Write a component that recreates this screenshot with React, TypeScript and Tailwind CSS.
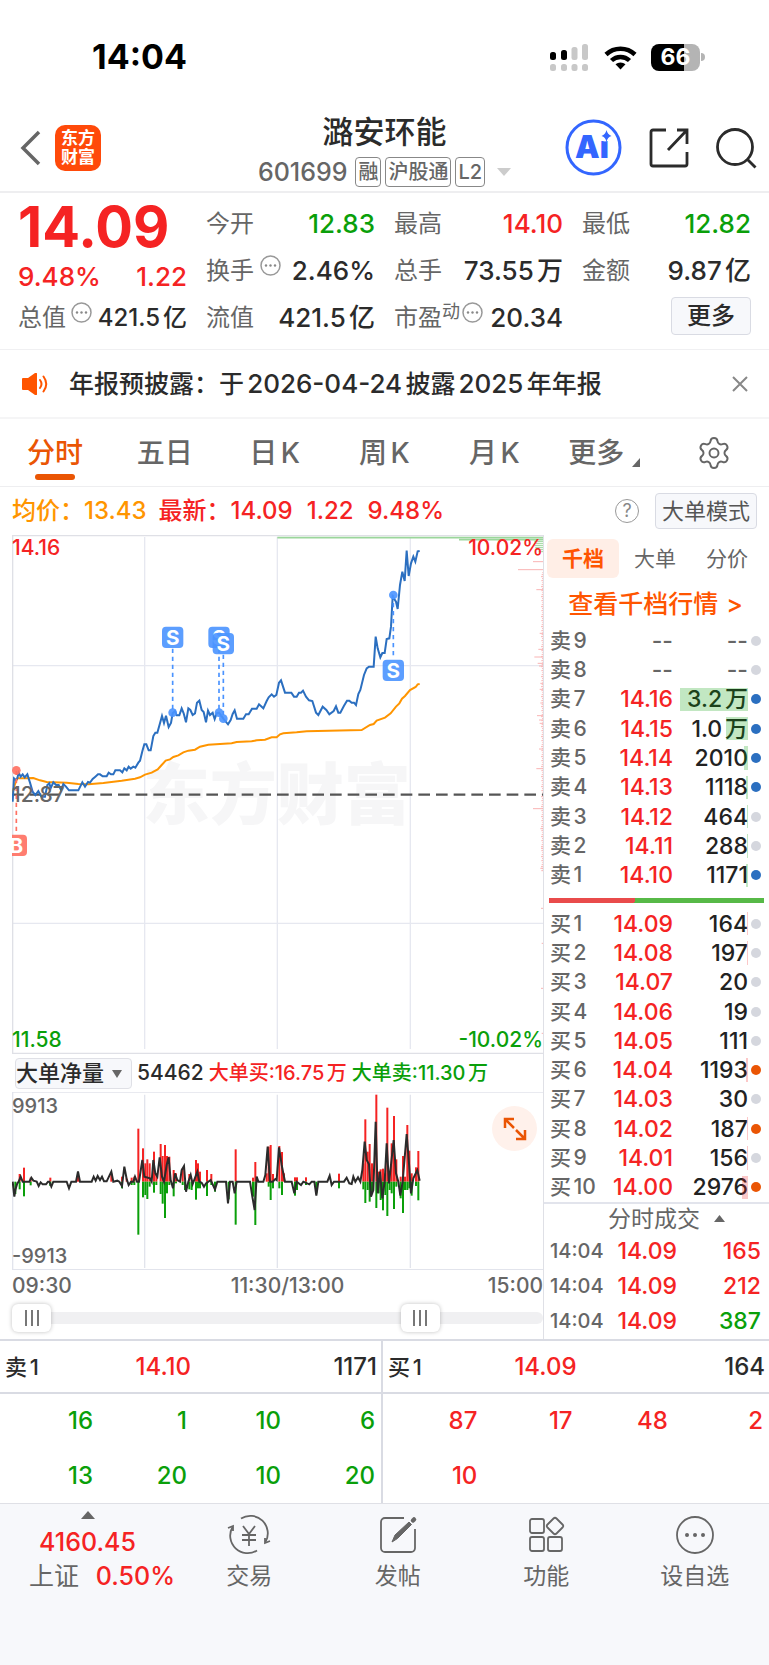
import React, { useState } from "react";
import { Settings } from "lucide-react";
import { clsx } from "clsx";

interface Level {
  name: string;
  price: string;
  qty: string;
  dot: "none" | "blue" | "orange";
  bar: number;
}

const sells: Level[] = [
  { name: "卖9", price: "--", qty: "--", dot: "none", bar: 0 },
  { name: "卖8", price: "--", qty: "--", dot: "none", bar: 0 },
  { name: "卖7", price: "14.16", qty: "3.2万", dot: "blue", bar: 68 },
  { name: "卖6", price: "14.15", qty: "1.0万", dot: "blue", bar: 22 },
  { name: "卖5", price: "14.14", qty: "2010", dot: "blue", bar: 4 },
  { name: "卖4", price: "14.13", qty: "1118", dot: "blue", bar: 2 },
  { name: "卖3", price: "14.12", qty: "464", dot: "none", bar: 1 },
  { name: "卖2", price: "14.11", qty: "288", dot: "none", bar: 1 },
  { name: "卖1", price: "14.10", qty: "1171", dot: "blue", bar: 2 },
];

const buys: Level[] = [
  { name: "买1", price: "14.09", qty: "164", dot: "none", bar: 1 },
  { name: "买2", price: "14.08", qty: "197", dot: "none", bar: 1 },
  { name: "买3", price: "14.07", qty: "20", dot: "none", bar: 0 },
  { name: "买4", price: "14.06", qty: "19", dot: "none", bar: 0 },
  { name: "买5", price: "14.05", qty: "111", dot: "none", bar: 0 },
  { name: "买6", price: "14.04", qty: "1193", dot: "orange", bar: 2 },
  { name: "买7", price: "14.03", qty: "30", dot: "none", bar: 0 },
  { name: "买8", price: "14.02", qty: "187", dot: "orange", bar: 1 },
  { name: "买9", price: "14.01", qty: "156", dot: "none", bar: 1 },
  { name: "买10", price: "14.00", qty: "2976", dot: "orange", bar: 6 },
];

const trades = [
  { time: "14:04", price: "14.09", qty: "165", up: true },
  { time: "14:04", price: "14.09", qty: "212", up: true },
  { time: "14:04", price: "14.09", qty: "387", up: false },
];

const pricePoints =
  "38,815 40,780 42,745 48,750 52,745 56,728 62,740 68,733 74,742 82,733 90,758 98,785 106,795 115,783 124,800 135,800 142,765 148,760 152,775 160,757 168,765 176,765 183,780 190,762 198,770 207,781 235,781 247,757 255,770 264,756 270,758 278,747 286,740 294,733 300,733 308,739 320,739 326,728 333,733 340,733 346,721 360,721 367,727 373,715 380,721 386,710 392,716 400,710 406,713 415,698 420,692 427,664 433,643 439,643 446,661 452,661 460,618 466,608 472,608 480,580 486,558 492,579 498,557 506,591 513,579 518,550 525,543 530,556 538,556 545,535 551,550 558,577 565,535 571,540 578,555 585,550 591,518 598,512 605,540 611,546 618,577 624,542 630,555 638,548 644,567 650,550 657,548 670,566 684,583 692,570 698,552 704,541 711,566 730,566 738,553 746,553 756,536 770,536 777,523 790,535 800,513 806,502 815,493 822,500 829,495 837,458 843,451 855,488 874,488 882,500 890,500 897,488 903,488 909,482 918,500 927,511 937,513 948,548 955,555 968,530 979,540 988,553 1001,543 1008,529 1015,548 1021,548 1032,527 1041,512 1048,512 1055,518 1062,518 1068,525 1075,492 1081,480 1092,435 1100,415 1107,410 1121,410 1127,320 1133,355 1141,382 1147,369 1154,369 1160,327 1168,325 1173,290 1178,200 1188,215 1193,237 1200,165 1207,125 1214,153 1220,62 1226,138 1233,100 1240,80 1246,95 1253,64 1259,63";

const avgPoints =
  "38,790 44,765 52,745 70,745 100,744 120,751 140,756 200,758 235,762 265,763 310,759 365,752 405,746 420,742 435,734 455,728 473,718 485,705 497,692 510,688 520,681 535,676 550,667 565,662 585,659 600,650 625,644 695,640 710,636 755,634 770,631 795,629 815,622 830,622 840,613 850,610 890,607 920,604 1085,600 1110,585 1121,582 1130,572 1155,563 1172,550 1188,530 1198,520 1206,506 1215,498 1230,480 1247,471 1253,463 1259,462";

const netPoints =
  "38,455 43,500 46,480 52,460 56,455 62,440 68,455 88,455 94,443 100,452 110,455 116,468 122,457 128,463 138,463 144,455 148,455 154,470 160,455 200,455 207,475 214,455 228,455 234,424 240,455 275,455 281,440 287,452 293,438 300,450 306,440 312,454 320,454 334,425 340,455 352,452 358,455 366,468 373,410 380,447 386,465 393,455 400,455 405,440 411,455 417,455 427,390 433,440 450,445 455,455 460,390 466,430 472,440 479,382 486,440 492,455 500,405 506,382 512,450 519,475 525,430 532,450 540,455 545,420 552,408 558,485 565,455 572,435 578,462 592,425 598,455 605,458 612,470 618,460 632,450 645,478 652,455 678,455 684,520 690,455 698,455 704,490 710,455 750,455 757,500 764,540 770,440 775,455 790,455 796,435 803,350 810,455 818,455 826,447 830,450 837,352 845,405 855,455 875,455 883,490 890,455 903,465 910,455 928,463 935,455 943,455 949,497 955,455 982,455 989,437 995,465 1002,455 1032,455 1040,443 1048,460 1055,462 1060,440 1066,455 1074,442 1081,455 1087,420 1094,335 1100,390 1107,403 1113,500 1120,480 1127,275 1133,490 1140,425 1147,505 1154,455 1160,340 1167,460 1181,330 1188,430 1195,455 1201,497 1208,455 1220,312 1227,400 1233,490 1240,445 1252,420 1259,452";

// [x, top, bottom] around the zero line at 455
const netBars = [
  [46, 455, 492], [59, 432, 478], [72, 413, 499], [92, 443, 466], [151, 443, 468],
  [234, 430, 455], [334, 430, 455], [366, 440, 475], [380, 445, 455], [395, 443, 465],
  [403, 440, 465], [415, 296, 614], [429, 355, 502], [436, 400, 495], [442, 388, 507],
  [449, 400, 470], [462, 365, 488], [469, 430, 465], [482, 342, 492], [488, 378, 521],
  [495, 345, 564], [501, 378, 490], [508, 380, 465], [521, 420, 499], [528, 430, 460],
  [548, 415, 465], [555, 455, 480], [568, 432, 478], [575, 455, 480], [588, 390, 509],
  [594, 400, 475], [600, 425, 475], [621, 420, 498], [634, 432, 465], [645, 455, 485],
  [686, 455, 508], [707, 358, 584], [759, 443, 500], [766, 396, 585], [800, 430, 455],
  [806, 350, 470], [812, 345, 510], [819, 432, 475], [838, 348, 475], [846, 366, 495],
  [852, 430, 455], [885, 442, 497], [891, 442, 480], [918, 442, 465], [949, 455, 490],
  [1017, 431, 475], [1090, 400, 478], [1096, 268, 519], [1103, 365, 480], [1109, 342, 515],
  [1116, 400, 490], [1129, 194, 534], [1136, 425, 490], [1142, 418, 510], [1149, 416, 541],
  [1156, 430, 495], [1162, 233, 558], [1169, 430, 480], [1175, 340, 490], [1182, 258, 537],
  [1189, 388, 470], [1202, 440, 505], [1209, 378, 549], [1215, 440, 480], [1222, 285, 480],
  [1228, 362, 475], [1235, 430, 497], [1248, 412, 468], [1255, 363, 511],
];

// pending orders along the right axis, [y, length]
const bigTicks = [
  [95, 30], [119, 75], [179, 20], [310, 10], [358, 14], [381, 26], [400, 16], [408, 12],
  [460, 8], [478, 10], [519, 8], [557, 18], [570, 12], [580, 10], [657, 12], [716, 20],
  [836, 30], [896, 8], [955, 6], [1015, 8], [1135, 6], [1240, 4], [1375, 6], [1510, 4],
];
const smallTicks = Array.from({ length: 150 }, (_, i) => [128 + i * 6, 2 + ((i * 7) % 5)]);

function StatusBar() {
  return (
    <div className="flex h-[104px] items-center justify-between pt-2.5 pr-[64px] pl-[92px]">
      <div className="text-[34px] leading-8 font-bold text-black">14:04</div>
      <div className="flex items-center gap-3.5">
        <svg width="40" height="27" viewBox="0 0 40 27" aria-hidden="true">
          <g fill="#000">
            <rect x="0" y="8" width="6" height="8" rx="2.500" />
            <rect x="11" y="6" width="6" height="10" rx="2.500" />
          </g>
          <g fill="#c8c8c8">
            <rect x="21.500" y="3" width="6" height="13" rx="2.500" />
            <rect x="32" y="0" width="6" height="16" rx="2.500" />
            <rect x="0" y="20" width="6" height="7" rx="2.500" />
            <rect x="11" y="20" width="6" height="7" rx="2.500" />
            <rect x="21.500" y="20" width="6" height="7" rx="2.500" />
            <rect x="32" y="20" width="6" height="7" rx="2.500" />
          </g>
        </svg>
        <svg width="33" height="25" viewBox="0 0 33 25" fill="none" stroke="#000" strokeWidth="4.500" aria-hidden="true">
          <path d="M2 9.500a21 21 0 0 1 29 0" />
          <path d="M7.500 15.500a13 13 0 0 1 18 0" />
          <path d="M16.500 24.500l-5-5.200a7.500 7.500 0 0 1 10 0z" fill="#000" stroke="none" />
        </svg>
        <div className="flex items-center gap-px">
          <div className="flex h-[27px] w-[49px] items-center justify-center rounded-lg bg-linear-to-r from-black from-67% to-[#b4b4b4] to-67% text-[23px] font-bold text-white">
            66
          </div>
          <div className="h-2 w-1 rounded-r-full bg-[#b4b4b4]" />
        </div>
      </div>
    </div>
  );
}

function Tag({ children }: { children: React.ReactNode }) {
  return (
    <span className="flex h-[30px] items-center rounded-sm border border-[#888] px-0.5 text-[20px] leading-6 text-[#666]">
      {children}
    </span>
  );
}

function Header() {
  return (
    <header className="grid h-[89px] grid-cols-[1fr_auto_1fr] items-center border-b-2 border-[#eeeef0] px-3">
      <div className="flex items-center gap-3.5 pl-2">
        <button aria-label="返回">
          <svg width="21" height="36" viewBox="0 0 21 36" fill="none" stroke="#666" strokeWidth="3.500">
            <path d="M19 2L3 18l16 16" />
          </svg>
        </button>
        <a href="#" className="flex size-[46px] flex-col items-center justify-center rounded-[10px] bg-[#ff4a0a] text-[17px] leading-[19px] font-bold text-white">
          <span>东方</span>
          <span>财富</span>
        </a>
      </div>
      <div className="flex flex-col items-center pt-1.5">
        <h1 className="h-[42px] text-[31px] leading-9 font-medium text-[#2b2b2b]">潞安环能</h1>
        <div className="flex items-center gap-1 text-[25px] leading-8 font-medium text-[#666]">
          <span className="pr-1">601699</span>
          <Tag>融</Tag>
          <Tag>沪股通</Tag>
          <Tag>L2</Tag>
          <svg width="14" height="8" viewBox="0 0 14 8" className="ml-2" fill="#ccc">
            <path d="M0 0h14L7 8z" />
          </svg>
        </div>
      </div>
      <div className="flex items-center justify-end gap-[27px]">
        <button aria-label="AI 助手">
          <svg width="57" height="57" viewBox="0 0 57 57">
            <circle cx="28.500" cy="28.500" r="26.500" fill="none" stroke="#3366ff" strokeWidth="3" />
            <text x="10" y="39" fontSize="31" fontWeight="900" fill="#3366ff">Ai</text>
            <circle cx="40" cy="16" r="6.500" fill="#fff" />
            <path d="M41.500 11q1 4.500 5 6q-4 1-5 6q-1-5-5-6q4-1.500 5-6z" fill="#3366ff" />
          </svg>
        </button>
        <button aria-label="分享">
          <svg width="40" height="40" viewBox="0 0 40 40" fill="none" stroke="#2b2b2b" strokeWidth="2.800">
            <path d="M17 2H4a2 2 0 0 0-2 2v32a2 2 0 0 0 2 2h32a2 2 0 0 0 2-2V24" />
            <path d="M28 2h10v14M37.500 2.500L19 22" />
          </svg>
        </button>
        <button aria-label="搜索">
          <svg width="41" height="42" viewBox="0 0 41 42" fill="none" stroke="#2b2b2b" strokeWidth="2.800">
            <circle cx="19" cy="20" r="17.500" />
            <path d="M31 32l8.500 8.500" />
          </svg>
        </button>
      </div>
    </header>
  );
}

function MoreDots() {
  return (
    <svg width="21" height="21" viewBox="0 0 21 21" className="mb-2.5 shrink-0" aria-hidden="true">
      <circle cx="10.500" cy="10.500" r="9.500" fill="none" stroke="#999" strokeWidth="1.500" />
      <g fill="#888">
        <circle cx="6" cy="10.500" r="1.200" />
        <circle cx="10.500" cy="10.500" r="1.200" />
        <circle cx="15" cy="10.500" r="1.200" />
      </g>
    </svg>
  );
}

interface StatProps {
  label: string;
  value: string;
  tone?: "up" | "down";
  dots?: boolean;
  sup?: string;
}

function Stat({ label, value, tone, dots, sup }: StatProps) {
  return (
    <div className="flex h-[47px] items-center justify-between whitespace-nowrap">
      <dt className="flex items-center text-[#666]">
        {label}
        {sup && <span className="mb-3 text-lg leading-5">{sup}</span>}
        {dots && <span className={clsx(sup ? "pl-0.5" : "pl-1.5")}><MoreDots /></span>}
      </dt>
      <dd
        className={clsx(
          "text-[26px] font-medium",
          tone === "up" ? "text-[#f52323]" : tone === "down" ? "text-[#0a9f0a]" : "text-[#2b2b2b]"
        )}
      >
        {value}
      </dd>
    </div>
  );
}

function Quote() {
  return (
    <section className="grid grid-cols-4 gap-x-[19px] border-b border-[#f0f0f2] px-[18px] pt-[7px] pb-2 text-2xl leading-8">
      <div>
        <div className="h-[60px] text-[56px] leading-[54px] font-bold text-[#f52323]">14.09</div>
        <div className="flex h-[34px] items-center justify-between text-[26px] font-medium text-[#f52323]">
          <span>9.48%</span>
          <span>1.22</span>
        </div>
        <div className="flex h-[47px] items-center justify-between whitespace-nowrap">
          <span className="text-[#666]">总值</span>
          <MoreDots />
          <span className="font-medium text-[#2b2b2b]">421.5亿</span>
        </div>
      </div>
      <dl>
        <Stat label="今开" value="12.83" tone="down" />
        <Stat label="换手" value="2.46%" dots />
        <Stat label="流值" value="421.5亿" />
      </dl>
      <dl>
        <Stat label="最高" value="14.10" tone="up" />
        <Stat label="总手" value="73.55万" />
        <Stat label="市盈" sup="动" value="20.34" dots />
      </dl>
      <div>
        <dl>
          <Stat label="最低" value="12.82" tone="down" />
          <Stat label="金额" value="9.87亿" />
        </dl>
        <button className="mt-[3px] ml-auto block h-[38px] w-20 rounded-sm border border-[#d9dbe3] bg-[#f7f8fb] font-medium text-[#2b2b2b]">
          更多
        </button>
      </div>
    </section>
  );
}

function Notice() {
  return (
    <div className="flex h-[69px] items-center border-b-2 border-[#f5f5f6] pr-[21px] pl-[22px]">
      <svg width="26" height="22" viewBox="0 0 26 22" fill="#ff5500" aria-hidden="true">
        <path d="M1 5h5l7-5q2-1 2 1v20q0 2-2 1l-7-5H1q-1 0-1-1V6q0-1 1-1z" />
        <path d="M18 7q3 4 0 8M21.500 3.500q5.500 7.500 0 15" fill="none" stroke="#ff5500" strokeWidth="2" strokeLinecap="round" />
      </svg>
      <p className="ml-[21px] text-[25px] leading-8 font-medium whitespace-nowrap text-[#2b2b2b]">
        年报预披露：于<span className="text-[26px]">2026-04-24</span>披露<span className="text-[26px]">2025</span>年年报
      </p>
      <button aria-label="关闭" className="ml-auto">
        <svg width="16" height="16" viewBox="0 0 16 16" stroke="#888" strokeWidth="2">
          <path d="M1 1l14 14M15 1L1 15" />
        </svg>
      </button>
    </div>
  );
}

function PeriodTabs() {
  const [active, setActive] = useState("分时");
  const tabs = ["分时", "五日", "日K", "周K", "月K"];

  return (
    <nav className="grid h-[68px] grid-cols-7 items-stretch border-b border-[#eeeef0] text-[28px] leading-8 font-medium text-[#666]">
      {tabs.map((tab) => (
        <button
          key={tab}
          onClick={() => setActive(tab)}
          className={clsx("relative flex items-center justify-center", active === tab && "text-[#ea5504]")}
        >
          {tab}
          {active === tab && (
            <span className="absolute bottom-1.5 left-1/2 h-1.5 w-10 -translate-x-1/2 rounded-full bg-[#ea5504]" />
          )}
        </button>
      ))}
      <button className="flex items-center justify-center gap-2">
        更多
        <svg width="8" height="9" viewBox="0 0 8 9" className="mt-5" fill="#666">
          <path d="M8 0v9H0z" />
        </svg>
      </button>
      <button aria-label="设置" className="flex items-center justify-center">
        <Settings size={36} strokeWidth={1.3} />
      </button>
    </nav>
  );
}

function AverageRow() {
  return (
    <div className="flex h-12 items-center px-3 text-[24px] leading-8 font-medium whitespace-nowrap text-[#f52323]">
      <span className="text-[#ff9500]">均价：13.43</span>
      <span className="ml-3">最新：14.09</span>
      <span className="ml-3.5">1.22</span>
      <span className="ml-3.5">9.48%</span>
      <button aria-label="帮助" className="ml-auto flex size-6 items-center justify-center rounded-full border-[1px] border-[#999] text-lg leading-5 font-normal text-[#888]">
        ?
      </button>
      <button className="ml-4 h-9 rounded-sm border border-[#d9dbe3] bg-[#f7f8fb] px-1.5 text-[22px] leading-8 font-normal text-[#555]">
        大单模式
      </button>
    </div>
  );
}

interface MarkProps {
  x: number;
  y: number;
  from: number;
  to: number;
  dotY: number;
  label: string;
  color: string;
}

function Mark({ x, y, from, to, dotY, label, color }: MarkProps) {
  return (
    <g>
      <path d={`M${x} ${from}V${to}`} stroke={color} strokeWidth="5" strokeDasharray="13 11" />
      <circle cx={x} cy={dotY} r="13" fill={color} fillOpacity="0.9" />
      <rect x={x - 32} y={y} width="64" height="64" rx="12" fill={color} fillOpacity="0.9" />
      <text x={x} y={y + 54} textAnchor="middle" fontSize="62" fontWeight="700" fill="#fff">
        {label}
      </text>
    </g>
  );
}

function PriceChart() {
  return (
    <div className="relative text-[21px] leading-6 font-medium">
      <svg viewBox="36 15 1593 1557" className="block w-full" role="img" aria-label="分时走势">
        <text x="428" y="866" fontSize="201" fontWeight="900" fill="#f6f6f7">东方财富</text>
        <g stroke="#e6e8f0" strokeWidth="4" fill="none">
          <path d="M434 21V1557M832 21V1557M1231 21V1557M36 407H1629M36 1180H1629" />
          <path d="M38 15V1572M36 17H1629M36 1570H1629" stroke="#dfe0e6" />
        </g>
        <g stroke="#9bd69b">
          <path d="M832 23H1629" strokeWidth="5" />
          <path d="M1377 29H1629" strokeWidth="5" />
          <path d="M1603 35H1629M1603 41H1629M1603 47H1629M1606 53H1629M1612 59H1629M1616 65H1629" strokeWidth="3" />
        </g>
        <g stroke="#f9b4b4" strokeWidth="3">
          {bigTicks.concat(smallTicks).map(([y, len], i) => (
            <path key={i} d={`M${1629 - len} ${y}H1629`} />
          ))}
        </g>
        <path d="M36 794H1629" stroke="#555" strokeWidth="7" strokeDasharray="35 18" />
        <polyline points={avgPoints} fill="none" stroke="#ff9500" strokeWidth="6" />
        <polyline points={pricePoints} fill="none" stroke="#2b6fc0" strokeWidth="6" />
        <Mark x={518} y={290} from={356} to={548} dotY={548} label="S" color="#4a93ff" />
        <Mark x={657} y={290} from={356} to={548} dotY={548} label="S" color="#4a93ff" />
        <Mark x={670} y={309} from={374} to={566} dotY={566} label="S" color="#4a93ff" />
        <Mark x={1180} y={389} from={195} to={387} dotY={195} label="S" color="#4a93ff" />
        <Mark x={49} y={914} from={722} to={912} dotY={721} label="B" color="#ff6f61" />
      </svg>
      <span className="absolute top-px left-0 text-[#f52323]">14.16</span>
      <span className="absolute top-px right-0 text-[#f52323]">10.02%</span>
      <span className="absolute top-1/2 left-0 -translate-y-1/2 text-[#666]">12.87</span>
      <span className="absolute bottom-0.5 left-0 text-[#0a9f0a]">11.58</span>
      <span className="absolute right-0 bottom-0.5 text-[#0a9f0a]">-10.02%</span>
    </div>
  );
}

function NetChart() {
  return (
    <div className="relative text-[20px] leading-6 font-medium text-[#666]">
      <svg viewBox="36 186 1593 534" className="block w-full" role="img" aria-label="大单净量">
        <path d="M38 186V720M36 186H1629M36 719H1629M434 194V714M832 194V714M1231 194V714" stroke="#e2e4ec" strokeWidth="4" />
        {netBars.map(([x, top, bottom]) => (
          <g key={x}>
            <rect x={x - 3} y={top} width="6" height={455 - top} fill="#f52323" />
            <rect x={x - 3} y="455" width="6" height={bottom - 455} fill="#0a9f0a" />
          </g>
        ))}
        <polyline points={netPoints} fill="none" stroke="#2b2b2b" strokeWidth="6" />
      </svg>
      <span className="absolute top-0.5 left-0">9913</span>
      <span className="absolute bottom-0.5 left-0">-9913</span>
      <button aria-label="全屏" className="absolute top-3.5 right-1.5 flex size-[45px] items-center justify-center rounded-full bg-[#fff1eb]">
        <svg width="24" height="24" viewBox="0 0 24 24" fill="none" stroke="#ea5504" strokeWidth="2.500">
          <path d="M2 11V2h9M2 2l9 9M22 13v9h-9M22 22l-9-9" />
        </svg>
      </button>
    </div>
  );
}

const thumbClass =
  "pointer-events-none absolute inset-x-0 top-0 h-8 w-full appearance-none bg-transparent [&::-webkit-slider-thumb]:pointer-events-auto [&::-webkit-slider-thumb]:h-7 [&::-webkit-slider-thumb]:w-[39px] [&::-webkit-slider-thumb]:appearance-none [&::-webkit-slider-thumb]:rounded-md [&::-webkit-slider-thumb]:bg-white [&::-webkit-slider-thumb]:bg-[repeating-linear-gradient(90deg,#777_0_2px,transparent_2px_6px)] [&::-webkit-slider-thumb]:bg-[length:14px_16px] [&::-webkit-slider-thumb]:bg-center [&::-webkit-slider-thumb]:bg-no-repeat [&::-webkit-slider-thumb]:shadow-[0_0_4px_rgba(0,0,0,0.25)]";

function RangeSlider() {
  const [start, setStart] = useState(0);
  const [end, setEnd] = useState(79);

  return (
    <div className="relative mb-[5px] flex h-8 items-center">
      <div className="h-3 w-full rounded-full bg-[#f0f0f2]" />
      <input type="range" aria-label="开始时间" value={start} onChange={(e) => setStart(+e.target.value)} className={thumbClass} />
      <input type="range" aria-label="结束时间" value={end} onChange={(e) => setEnd(+e.target.value)} className={thumbClass} />
    </div>
  );
}

function ChartPanel() {
  return (
    <div className="min-w-0 border-r border-[#dfe0e6] pl-3">
      <PriceChart />
      <div className="flex h-[38px] items-center pl-[3px] text-[20px] leading-6 font-medium whitespace-nowrap">
        <div className="relative">
          <select
            aria-label="副图指标"
            className="block h-[31px] w-[117px] appearance-none rounded-sm border border-[#dfe0e6] bg-[#f7f8fb] text-[22px] text-[#2b2b2b]"
          >
            <option>大单净量</option>
          </select>
          <svg width="10" height="8" viewBox="0 0 10 8" className="pointer-events-none absolute top-3 right-2.5" fill="#666">
            <path d="M0 0h10L5 8z" />
          </svg>
        </div>
        <span className="ml-[5px] text-[21px] text-[#2b2b2b]">54462</span>
        <span className="ml-[5px] text-[#f52323]">大单买:16.75万</span>
        <span className="ml-[5px] text-[#0a9f0a]">大单卖:11.30万</span>
      </div>
      <NetChart />
      <div className="grid h-8 grid-cols-[1fr_auto_1fr] items-center text-[21px] leading-6 font-medium text-[#666]">
        <span>09:30</span>
        <span className="pl-5">11:30/13:00</span>
        <span className="text-right">15:00</span>
      </div>
      <RangeSlider />
    </div>
  );
}

function Levels({ rows, side }: { rows: Level[]; side: "sell" | "buy" }) {
  return (
    <table
      className={clsx(
        "w-full table-fixed text-[23px] leading-6 font-medium",
        side === "sell" ? "h-[264px]" : "h-[293px]"
      )}
    >
      <colgroup>
        <col className="w-[60px]" />
        <col className="w-[69px]" />
        <col />
        <col className="w-[21px]" />
      </colgroup>
      <tbody>
        {rows.map((row) => (
          <tr key={row.name}>
            <th scope="row" className="p-0 pl-1.5 text-left text-[21px] font-medium whitespace-nowrap text-[#666]">
              {row.name}
            </th>
            <td className={clsx("p-0 text-right", row.price === "--" ? "text-[#666]" : "text-[#f52323]")}>{row.price}</td>
            <td className={clsx("relative p-0 text-right whitespace-nowrap", row.qty === "--" ? "text-[#666]" : "text-[#222]")}>
              {row.qty}
              <span
                className={clsx("absolute inset-y-[3px] right-0", side === "sell" ? "bg-[#0a9f0a]/25" : "bg-[#f52323]/25")}
                style={{ width: row.bar }}
              />
            </td>
            <td className="p-0 pl-[3px]">
              <span
                className={clsx(
                  "block size-2.5 rounded-full",
                  row.dot === "blue" ? "bg-[#2b6fc0]" : row.dot === "orange" ? "bg-[#ea5504]" : "bg-[#d5d7de]"
                )}
              />
            </td>
          </tr>
        ))}
      </tbody>
    </table>
  );
}

function BookPanel() {
  const [tab, setTab] = useState("千档");

  return (
    <aside className="pt-1">
      <div className="grid grid-cols-3 pr-1.5 pl-[3px] text-[21px] leading-6">
        {["千档", "大单", "分价"].map((name) => (
          <button
            key={name}
            onClick={() => setTab(name)}
            className={clsx(
              "h-[39px] rounded-md",
              tab === name ? "bg-[#ffeee6] font-bold text-[#ff5500]" : "text-[#666]"
            )}
          >
            {name}
          </button>
        ))}
      </div>
      <a href="#" className="flex h-12 items-center justify-center gap-2 pt-1 pr-0.5 text-[25px] leading-8 font-medium text-[#ff5500]">
        <span>查看千档行情</span>
        <span>&gt;</span>
      </a>
      <Levels rows={sells} side="sell" />
      <div className="mx-[5px] mt-2 mb-1.5 h-[5px] bg-linear-105 from-[#e94b4b] from-40% to-[#57b947] to-40%" />
      <Levels rows={buys} side="buy" />
      <button className="flex h-[31px] w-full items-center justify-center gap-3.5 border-t-2 border-[#e2e4ec] pl-5 text-[23px] leading-7 text-[#666]">
        分时成交
        <svg width="11" height="7" viewBox="0 0 11 7" fill="#666">
          <path d="M5.500 0L11 7H0z" />
        </svg>
      </button>
      <table className="w-full table-fixed text-[23px] leading-6 font-medium">
        <tbody>
          {trades.map((t, i) => (
            <tr key={i} className="h-[35px]">
              <td className="w-[62px] p-0 pl-1.5 text-[20px] text-[#666]">{t.time}</td>
              <td className="w-[71px] p-0 text-right text-[#f52323]">{t.price}</td>
              <td className={clsx("p-0 pr-2 text-right", t.up ? "text-[#f52323]" : "text-[#0a9f0a]")}>{t.qty}</td>
            </tr>
          ))}
        </tbody>
      </table>
    </aside>
  );
}

interface QueueProps {
  name: string;
  price: string;
  total: string;
  orders: string[][];
  up: boolean;
}

function Queue({ name, price, total, orders, up }: QueueProps) {
  return (
    <table className="w-full table-fixed text-2xl leading-7 font-medium">
      <colgroup>
        <col className="w-[26%]" />
        <col />
        <col />
        <col />
      </colgroup>
      <thead>
        <tr className="h-[52px] border-b-2 border-[#d9dbe3] text-[#2b2b2b]">
          <th scope="col" className="p-0 pl-[5px] text-left text-[22px] font-medium">{name}</th>
          <th scope="col" className="p-0 pr-0.5 text-right font-medium text-[#f52323]">{price}</th>
          <th scope="col" colSpan={2} className="p-0 pr-1 text-right font-medium">{total}</th>
        </tr>
      </thead>
      <tbody className={up ? "text-[#f52323]" : "text-[#0a9f0a]"}>
        {orders.map((row, i) => (
          <tr key={i} className="h-[55px]">
            {row.map((v, j) => (
              <td key={j} className="p-0 pr-1.5 text-right">{v}</td>
            ))}
          </tr>
        ))}
      </tbody>
    </table>
  );
}

const navItems = [
  {
    label: "交易",
    icon: (
      <>
        <path d="M12 3.500A17.500 17.500 0 0 1 36.500 27M28 35.500A17.500 17.500 0 0 1 3.500 12" />
        <path d="M-1 13l5-2 0 5M41 26l-5 2 0-5" />
        <path d="M14 11l6 8 6-8M20 19v12M13 20h14M13 25h14" />
      </>
    ),
  },
  {
    label: "发帖",
    icon: (
      <>
        <path d="M26 3H7a4 4 0 0 0-4 4v26a4 4 0 0 0 4 4h26a4 4 0 0 0 4-4V14" />
        <path d="M14 27l3-7L31 7l2.500 2.500-14 14z" fill="#666" strokeWidth="1" />
        <path d="M35 5.500l1-1" strokeWidth="4.500" strokeLinecap="round" />
      </>
    ),
  },
  {
    label: "功能",
    icon: (
      <>
        <rect x="4" y="4" width="14" height="14" rx="2" />
        <rect x="4" y="22" width="14" height="14" rx="2" />
        <rect x="22" y="22" width="14" height="14" rx="2" />
        <path d="M27.500 3.500q1.500-1.500 3 0l6 6q1.500 1.500 0 3l-6 6q-1.500 1.500-3 0l-6-6q-1.500-1.500 0-3z" />
      </>
    ),
  },
  {
    label: "设自选",
    icon: (
      <>
        <circle cx="20" cy="20" r="18" />
        <path d="M12 20h.01M20 20h.01M28 20h.01" strokeWidth="4" strokeLinecap="round" />
      </>
    ),
  },
];

function BottomNav() {
  return (
    <nav className="flex min-h-[160px] flex-1 border-t border-[#dfe0e6] bg-[#f7f8fb] text-[#666]">
      <a href="#" className="flex w-[175px] flex-col items-center pt-[7px] text-[25px] leading-[34px] font-medium text-[#f52323]">
        <svg width="14" height="8" viewBox="0 0 14 8" className="mb-1.5" fill="#666">
          <path d="M7 0l7 8H0z" />
        </svg>
        <span>4160.45</span>
        <span className="flex w-full justify-between pl-[29px]">
          <span className="font-normal text-[#666]">上证</span>
          <span>0.50%</span>
        </span>
      </a>
      {navItems.map((item) => (
        <button key={item.label} className="flex flex-1 flex-col items-center pt-[11px] text-[23px] leading-[34px]">
          <svg width="40" height="40" viewBox="0 0 40 40" className="mb-1 overflow-visible" fill="none" stroke="#666" strokeWidth="1.800" aria-hidden="true">
            {item.icon}
          </svg>
          {item.label}
        </button>
      ))}
    </nav>
  );
}

export default function App() {
  return (
    <div className="flex min-h-screen flex-col bg-white font-[Inter,'Noto_Sans_CJK_SC',sans-serif] [text-autospace:normal]">
      <StatusBar />
      <Header />
      <Quote />
      <Notice />
      <PeriodTabs />
      <AverageRow />
      <main className="grid grid-cols-[minmax(0,1fr)_225px]">
        <ChartPanel />
        <BookPanel />
      </main>
      <section className="grid grid-cols-[383fr_386fr] items-start border-t-2 border-[#d9dbe3]">
        <div className="border-r-2 border-[#d9dbe3]">
          <Queue name="卖1" price="14.10" total="1171" up={false} orders={[["16", "1", "10", "6"], ["13", "20", "10", "20"]]} />
        </div>
        <Queue name="买1" price="14.09" total="164" up orders={[["87", "17", "48", "2"], ["10", "", "", ""]]} />
      </section>
      <BottomNav />
    </div>
  );
}
